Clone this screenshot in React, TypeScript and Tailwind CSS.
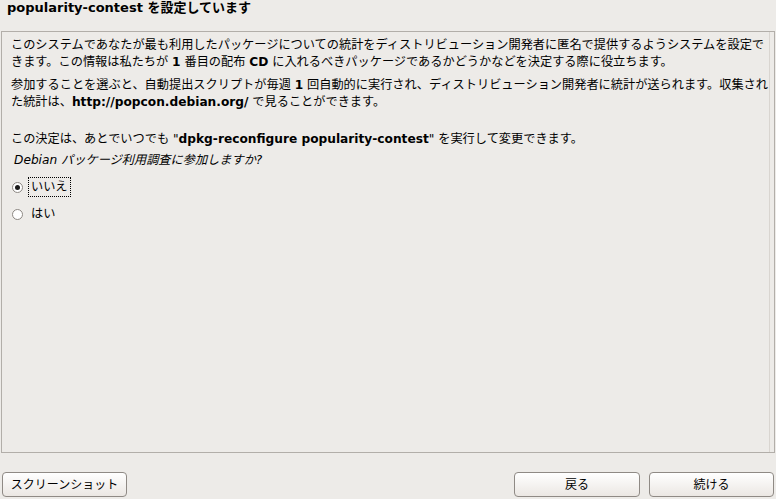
import React from 'react'

const FONT = "font-['DejaVu_Sans','Noto_Sans_CJK_JP',sans-serif]"

function Radio({ checked, label, focused }: { checked?: boolean; label: string; focused?: boolean }) {
  return (
    <div className="flex items-center h-[20px]">
      <span className="ml-[10px] w-[11px] h-[11px] rounded-full border border-[#8d8883] bg-white flex items-center justify-center">
        {checked && <span className="w-[5px] h-[5px] rounded-full bg-[#1a1a1a]" />}
      </span>
      <span
        className={`ml-[6px] px-[2px] h-[18px] leading-[18px] ${
          focused ? 'outline outline-1 outline-dotted outline-black' : ''
        }`}
      >
        {label}
      </span>
    </div>
  )
}

function Button({ label, className }: { label: string; className?: string }) {
  return (
    <button
      className={`h-[25px] rounded-[4px] border border-[#8f8a85] bg-gradient-to-b from-white to-[#ebe7e3] text-[12px] leading-none text-black ${className ?? ''}`}
    >
      {label}
    </button>
  )
}

export default function App() {
  return (
    <div className={`w-[776px] h-[499px] bg-[#edebe8] text-black overflow-hidden flex flex-col ${FONT}`}>
      <h1 className="h-[31px] pl-[7px] text-[13px] leading-[15px] font-bold">
        popularity-contest を設定しています
      </h1>

      <div className="ml-[1px] mr-[1px] h-[422px] border border-[#b2aea9] flex">
        <div className="flex-1 min-w-0 border-r border-[#d9d5d0] pl-[9px] pt-[5px] text-[12.2px] leading-[17px] whitespace-nowrap">
          <p>
            このシステムであなたが最も利用したパッケージについての統計をディストリビューション開発者に匿名で提供するようシステムを設定で
            <br />
            きます。この情報は私たちが <b>1</b> 番目の配布 <b>CD</b> に入れるべきパッケージであるかどうかなどを決定する際に役立ちます。
          </p>
          <p className="mt-[6px]">
            参加することを選ぶと、自動提出スクリプトが毎週 <b>1</b> 回自動的に実行され、ディストリビューション開発者に統計が送られます。収集され
            <br />
            た統計は、<b>http://popcon.debian.org/</b> で見ることができます。
          </p>
          <p className="mt-[20px]">
            この決定は、あとでいつでも "<b>dpkg-reconfigure popularity-contest</b>" を実行して変更できます。
          </p>
          <p className="mt-[4px] pl-[3px] italic">Debian パッケージ利用調査に参加しますか?</p>
          <div className="mt-[8px] -ml-[9px] flex flex-col gap-[7px]">
            <Radio checked focused label="いいえ" />
            <Radio label="はい" />
          </div>
        </div>
        <div className="w-[4px]" />
      </div>

      <div className="mt-[19px] flex px-[2px]">
        <Button label="スクリーンショット" className="w-[125px]" />
        <div className="flex-1" />
        <Button label="戻る" className="w-[126px]" />
        <Button label="続ける" className="w-[125px] ml-[9px]" />
      </div>
    </div>
  )
}
